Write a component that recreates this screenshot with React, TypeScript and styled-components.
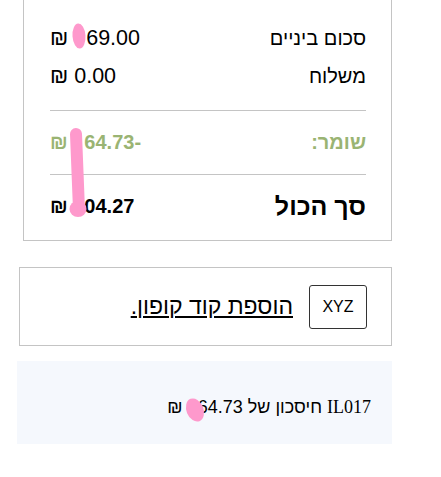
import styled, { createGlobalStyle } from "styled-components";

const GlobalStyle = createGlobalStyle`
    body {
        margin: 0;
        background: #fff;
        font-family: "Liberation Sans", Arial, sans-serif;
        color: #000;
    }
`;

export default function App() {
    return (
        <Page dir="rtl">
            <GlobalStyle />
            <SummaryCard>
                <Row>
                    <Label>סכום ביניים</Label>
                    <Amount dir="ltr">₪ <Redacted>2</Redacted>69.00</Amount>
                </Row>
                <Row>
                    <Label>משלוח</Label>
                    <Amount dir="ltr">₪ 0.00</Amount>
                </Row>
                <Divider />
                <Row $tone="saving">
                    <Label>שומר:</Label>
                    <Amount dir="ltr" $size={20}>₪ <Redacted>1</Redacted>64.73-</Amount>
                </Row>
                <Divider $gap={13} />
                <Row $tone="total">
                    <TotalLabel>סך הכול</TotalLabel>
                    <Amount dir="ltr" $size={20}>₪ <Redacted>1</Redacted>04.27</Amount>
                </Row>
            </SummaryCard>

            <CouponCard>
                <CodeButton>XYZ</CodeButton>
                <CouponLink href="#">הוספת קוד קופון.</CouponLink>
            </CouponCard>

            <SavingNote>
                <NoteText>
                    <Code>IL017</Code> חיסכון של <span dir="ltr">₪ <Redacted>1</Redacted>64.73</span>
                </NoteText>
            </SavingNote>

            {/* redaction marks drawn over the figures */}
            <Marks width="441" height="477" viewBox="0 0 441 477">
                <ellipse cx="79" cy="36" rx="6.5" ry="12.5" fill="#fe99cc" transform="rotate(-4 79 36)" />
                <path d="M76 134 L79 210" stroke="#fe99cc" strokeWidth="12" strokeLinecap="round" fill="none" />
                <ellipse cx="78" cy="209" rx="8.5" ry="8" fill="#fe99cc" />
                <ellipse cx="195" cy="410" rx="8.5" ry="12" fill="#fe99cc" transform="rotate(-22 195 410)" />
            </Marks>
        </Page>
    );
}

const Page = styled.div`
    position: relative;
    width: 441px;
    height: 477px;
    display: flex;
    flex-direction: column;
    align-items: flex-start;
    padding-right: 49px;
    box-sizing: border-box;
`;

const SummaryCard = styled.div`
    width: 369px;
    box-sizing: border-box;
    border: 1px solid #c4c4c4;
    border-top: none;
    padding: 19px 25px 15px 26px;
`;

const Row = styled.div<{ $tone?: "saving" | "total" }>`
    display: flex;
    justify-content: space-between;
    align-items: center;
    height: 38px;
    font-size: 20px;
    font-weight: ${({ $tone }) => ($tone ? 700 : 400)};
    color: ${({ $tone }) => ($tone === "saving" ? "#9ab473" : "#000")};
    margin-top: ${({ $tone }) => ($tone ? "12px" : "0")};
`;

const Label = styled.span``;

const TotalLabel = styled.span`
    font-size: 25px;
`;

const Amount = styled.span<{ $size?: number }>`
    white-space: pre;
    font-size: ${({ $size }) => $size ?? 21.5}px;
`;

// digit that sits under a redaction mark in the source
const Redacted = styled.span`
    color: transparent;
`;

const Divider = styled.div<{ $gap?: number }>`
    height: 1px;
    background: #c4c4c4;
    margin-top: ${({ $gap }) => $gap ?? 15}px;
`;

const CouponCard = styled.div`
    margin-top: 26px;
    width: 373px;
    height: 79px;
    box-sizing: border-box;
    border: 1px solid #c4c4c4;
    padding: 0 24px;
    display: flex;
    align-items: center;
    gap: 16px;
`;

const CodeButton = styled.button`
    width: 58px;
    height: 44px;
    border: 1px solid #333;
    border-radius: 3px;
    background: #fff;
    font-family: "Liberation Sans", Arial, sans-serif;
    font-size: 16px;
    color: #000;
    padding: 0;
`;

const CouponLink = styled.a`
    font-size: 23px;
    color: #000;
    text-decoration: underline;
`;

const SavingNote = styled.div`
    margin-top: 15px;
    width: 375px;
    height: 83px;
    box-sizing: border-box;
    background: #f5f8fd;
    padding: 10px 21px 0;
    display: flex;
    align-items: center;
`;

const NoteText = styled.div`
    font-size: 18px;
    font-family: "Liberation Sans", Arial, sans-serif;
`;

const Code = styled.span`
    font-family: "Liberation Serif", "Times New Roman", serif;
`;

const Marks = styled.svg`
    position: absolute;
    top: 0;
    left: 0;
    pointer-events: none;
`;
